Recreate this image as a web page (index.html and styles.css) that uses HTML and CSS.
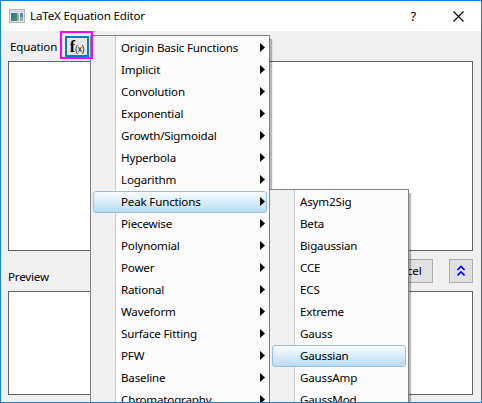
FILE: index.html
```
<!DOCTYPE html>
<html lang="en">
<head>
<meta charset="utf-8">
<title>LaTeX Equation Editor</title>
<link rel="stylesheet" href="styles.css">
</head>
<body>
<div class="window">
  <header class="titlebar">
    <svg class="app-icon" width="16" height="14" viewBox="0 0 16 14">
      <defs>
        <linearGradient id="pane" x1="0" y1="0" x2="1" y2="1"><stop offset="0" stop-color="#2c6fa0"/><stop offset="1" stop-color="#4f9560"/></linearGradient>
      </defs>
      <rect x=".5" y=".5" width="15" height="13" fill="#e4e6e8" stroke="#b5b8bb"/>
      <rect x="1" y="1" width="14" height="2" fill="#d4d7da"/>
      <rect x="2" y="4" width="8" height="8" fill="url(#pane)"/>
      <rect x="8" y="4" width="2" height="8" fill="#8fb5c5"/>
      <rect x="11" y="4" width="3" height="4" fill="#5f8795"/>
      <rect x="11" y="8" width="3" height="4" fill="#8fb09c"/>
    </svg>
    <h1 class="title">LaTeX Equation Editor</h1>
    <span class="help">?</span>
    <svg class="close" width="11" height="11" viewBox="0 0 11 11"><path d="M.5 .5l10 10M10.5 .5l-10 10" stroke="#000" stroke-width="1.1"/></svg>
  </header>
  <main class="content">
    <div class="toolbar"><span class="label">Equation</span></div>
    <div class="equation-box"></div>
    <div class="actions">
      <span class="label preview-label">Preview</span>
      <button class="btn cancel">Cancel</button>
      <button class="btn collapse"><svg width="8" height="12" viewBox="0 0 8 12"><path d="M.5 5L4 1.5L7.5 5M.5 10.5L4 7L7.5 10.5" fill="none" stroke="#0000f0" stroke-width="1.6"/></svg></button>
    </div>
    <div class="preview-box"></div>
  </main>
  <div class="callout"><div class="fx"><b>f</b><small>(x)</small></div></div>
  <ul class="menu main-menu">
    <li class="more">Origin Basic Functions</li>
    <li class="more">Implicit</li>
    <li class="more">Convolution</li>
    <li class="more">Exponential</li>
    <li class="more">Growth/Sigmoidal</li>
    <li class="more">Hyperbola</li>
    <li class="more">Logarithm</li>
    <li class="more active">Peak Functions</li>
    <li class="more">Piecewise</li>
    <li class="more">Polynomial</li>
    <li class="more">Power</li>
    <li class="more">Rational</li>
    <li class="more">Waveform</li>
    <li class="more">Surface Fitting</li>
    <li class="more">PFW</li>
    <li class="more">Baseline</li>
    <li class="more">Chromatography</li>
  </ul>
  <ul class="menu sub-menu">
    <li>Asym2Sig</li>
    <li>Beta</li>
    <li>Bigaussian</li>
    <li>CCE</li>
    <li>ECS</li>
    <li>Extreme</li>
    <li>Gauss</li>
    <li class="active">Gaussian</li>
    <li>GaussAmp</li>
    <li>GaussMod</li>
  </ul>
</div>
</body>
</html>
```
FILE: styles.css
```
* { box-sizing: border-box; }
body { margin: 0; overflow: hidden; }
.window {
  position: relative;
  width: 482px;
  height: 403px;
  overflow: hidden;
  border: 1px solid #1883d7;
  background: #f0f0f0;
  color: #000;
  font: 11.6px/16px "Noto Sans", "Open Sans", sans-serif;
  letter-spacing: -0.18px;
}
.titlebar {
  display: flex;
  align-items: center;
  height: 30px;
  padding: 0 17px 0 8px;
  background: #fff;
}
.app-icon { margin-right: 5px; }
.title { margin: 0; font-size: 11.6px; font-weight: 400; }
.help { margin-left: auto; margin-right: 37px; font-size: 13px; }
.content { padding: 0 8px 0 7px; }
.toolbar { display: flex; height: 30px; padding: 8px 0 0 2px; }
.equation-box { height: 190px; background: #fff; border: 1px solid #646464; }
.actions { display: flex; height: 40px; padding-top: 8px; }
.preview-label { margin: 10px auto 0 0; }
.btn {
  height: 24px;
  padding: 0;
  border: 1px solid #adadad;
  background: #e1e1e1;
  color: #000;
  font: inherit;
  letter-spacing: inherit;
}
.cancel { width: 58px; margin-right: 16px; }
.collapse { display: flex; align-items: center; justify-content: center; width: 24px; }
.preview-box { height: 104px; background: #fff; border: 1px solid #646464; }
.callout {
  position: absolute;
  left: 59px;
  top: 30px;
  width: 33px;
  height: 28px;
  padding: 3px 2px 0 3px;
  border: 2px solid #ff00ff;
  z-index: 3;
}
.fx {
  display: flex;
  align-items: center;
  justify-content: center;
  width: 24px;
  height: 21px;
  border: 2px solid #0078d7;
  background: #e8e8e8;
  font-family: "Liberation Serif", serif;
  letter-spacing: 0;
}
.fx b { font-size: 16px; }
.fx small { padding-top: 4px; font: 8.5px/12px "Liberation Sans", sans-serif; letter-spacing: -.2px; }
.menu {
  position: absolute;
  margin: 0;
  padding: 1px 2px;
  list-style: none;
  border: 1px solid #808080;
  background: linear-gradient(90deg, #f0f0f0 24px, #c8c8c8 24px 25px, #fcfcfc 25px);
  box-shadow: 3px 3px 1px -1px rgba(0, 0, 0, .28);
}
.main-menu { left: 89px; top: 34px; width: 180px; height: 400px; z-index: 1; }
.sub-menu { left: 268px; top: 188px; width: 140px; height: 300px; z-index: 2; }
.menu li {
  display: flex;
  align-items: center;
  justify-content: space-between;
  height: 22px;
  padding: 0 1px 0 27px;
  border: 1px solid transparent;
  border-radius: 3px;
}
.menu .active {
  border-color: #98bfdc;
  background: linear-gradient(#f8fbfe, #d9ecf8 50%, #b8dcf3);
}
.more::after {
  content: "";
  width: 5px;
  height: 9px;
  margin-top: -1px;
  background: #000;
  clip-path: polygon(0 0, 100% 50%, 0 100%);
}
```
